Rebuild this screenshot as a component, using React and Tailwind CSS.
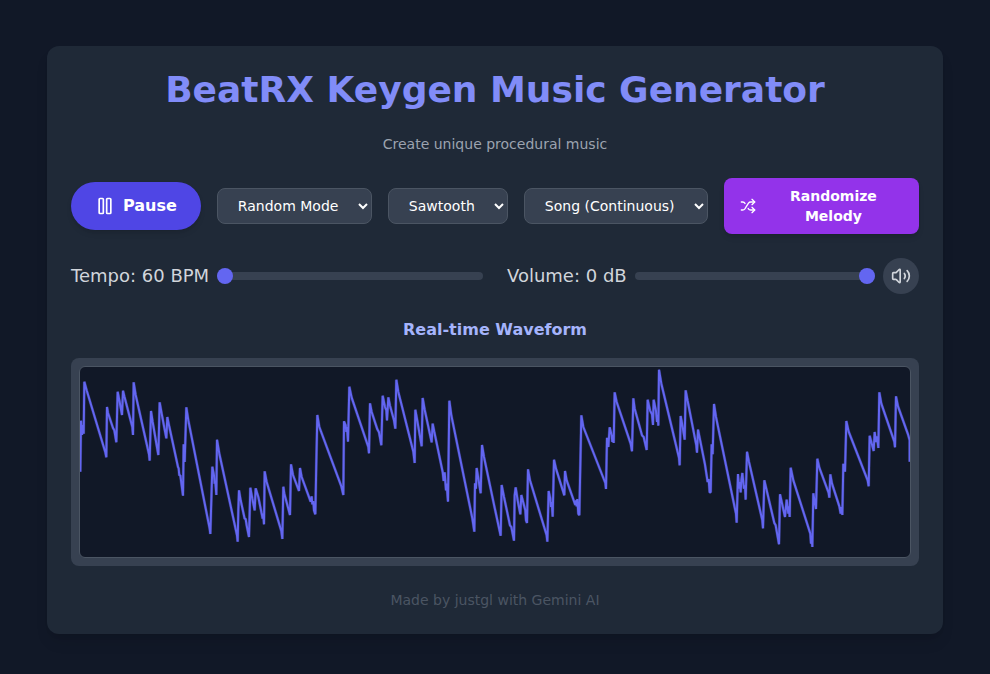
import { useState } from "react";
import { Pause, Play, Shuffle, Volume2, VolumeX } from "lucide-react";

const WAVE_POINTS = `1,314 3,161 6,204 8,174 11,200 13,44 20,70 76,256 79,271 81,120 84,138 99,183 103,190 109,226 113,74 119,105 126,144
129,71 133,88 157,180 159,204 161,46 167,84 207,262 209,281 213,132 218,165 235,264 239,106 245,140 259,214 262,150 267,175 294,300
296,304 298,325 301,325 309,386 311,232 314,285 319,121 325,160 389,485 391,501 397,299 402,325 404,350 406,345 409,384 411,218
418,260 471,505 473,524 475,430 477,370 482,400 494,455 497,456 500,475 507,510 511,362 517,395 524,430 527,364 535,390 548,455
550,440 552,472 554,313 560,345 604,492 607,516 610,359 613,380 630,444 633,292 639,324 657,372 660,303 665,330 692,404 695,388
697,412 700,402 702,430 706,442 709,284 712,144 718,180 784,358 790,384 792,163 797,175 799,195 801,180 804,224 808,59 815,92
865,240 867,259 870,109 875,135 892,187 897,196 904,235 908,86 915,120 919,130 921,160 925,91 930,116 942,160 946,185 949,38
955,75 1000,254 1004,288 1006,128 1012,162 1025,238 1028,93 1034,128 1055,226 1058,170 1063,195 1088,315 1091,342 1094,316
1098,370 1100,350 1104,404 1108,101 1114,145 1177,454 1183,494 1185,349 1188,365 1190,303 1202,379 1206,234 1212,270 1245,427
1262,506 1265,354 1272,390 1290,475 1294,480 1302,521 1304,385 1307,361 1313,400 1321,442 1324,384 1336,430 1338,460 1341,468
1344,307 1350,340 1400,505 1402,524 1406,372 1411,395 1413,420 1415,405 1418,449 1422,278 1428,305 1453,385 1455,312 1460,340
1486,414 1489,400 1490,418 1492,396 1495,440 1498,445 1504,145 1510,180 1576,348 1578,366 1581,212 1585,240 1589,181 1595,205
1597,225 1599,204 1601,228 1604,76 1610,105 1652,230 1656,253 1660,94 1664,125 1686,205 1691,210 1700,249 1703,98 1710,130
1716,142 1719,174 1721,98 1728,132 1731,165 1733,145 1735,176 1737,8 1744,50 1797,272 1799,295 1802,147 1808,180 1814,218
1817,70 1823,102 1849,235 1851,257 1854,188 1875,293 1883,345 1886,336 1889,376 1892,376 1895,232 1898,262 1902,111 1908,150
1968,440 1970,467 1974,321 1977,365 1979,345 1982,376 1984,340 1987,318 1992,365 1995,355 1997,398 2001,254 2007,285 2047,460
2049,484 2053,340 2083,468 2087,475 2097,532 2100,382 2115,450 2120,398 2125,440 2127,418 2129,450 2132,302 2140,340 2191,500
2193,530 2195,512 2197,540 2200,379 2205,410 2208,426 2212,275 2218,302 2246,378 2248,392 2251,322 2256,350 2278,418 2282,440
2284,420 2287,444 2290,290 2295,314 2299,162 2306,194 2363,340 2366,358 2369,206 2381,252 2384,195 2388,225 2391,208 2395,243
2398,76 2404,110 2443,224 2445,241 2448,88 2454,118 2484,202 2489,220 2489,284`;

const SELECT_CLASS =
  "h-9 shrink-0 rounded-lg border border-[#4b5563] bg-[#374151] px-4 py-2 text-sm text-white";

const RANGE_CLASS =
  "h-2 w-full min-w-0 flex-1 cursor-pointer appearance-none rounded-lg bg-[#374151] [&::-webkit-slider-thumb]:h-4 [&::-webkit-slider-thumb]:w-4 [&::-webkit-slider-thumb]:appearance-none [&::-webkit-slider-thumb]:rounded-full [&::-webkit-slider-thumb]:bg-[#6366f1]";

function Waveform() {
  return (
    <div className="rounded-lg bg-[#374151] p-2">
      <svg
        role="img"
        aria-label="Real-time waveform"
        viewBox="0 0 2490 570"
        preserveAspectRatio="none"
        className="block h-48 w-full rounded-md border border-[#4b5563] bg-[#111827]"
      >
        <g fill="none" stroke="#6366f1" strokeLinejoin="bevel">
          <polyline points={WAVE_POINTS} strokeWidth="3" strokeOpacity="0.35" vectorEffect="non-scaling-stroke" />
          <polyline points={WAVE_POINTS} strokeWidth="2" vectorEffect="non-scaling-stroke" />
        </g>
      </svg>
    </div>
  );
}

export default function App() {
  const [playing, setPlaying] = useState(true);
  const [muted, setMuted] = useState(false);
  const [tempo, setTempo] = useState(60);
  const [volume, setVolume] = useState(0);

  return (
    <div className="flex min-h-screen flex-col items-center justify-center bg-[#111827] px-4 pt-[22px] pb-4 font-['DejaVu_Sans',sans-serif] text-[#f3f4f6]">
      <main className="flex w-full max-w-4xl flex-col gap-6 rounded-xl bg-[#1f2937] p-6 shadow-lg">
        <h1 className="text-center text-4xl font-bold text-[#818cf8]">BeatRX Keygen Music Generator</h1>
        <p className="text-center text-sm text-[#9ca3af]">Create unique procedural music</p>

        <div className="flex items-center justify-center gap-4">
          <button
            type="button"
            onClick={() => setPlaying(!playing)}
            className="flex shrink-0 items-center rounded-full bg-[#4f46e5] px-6 py-3 font-bold text-white shadow-md"
          >
            {playing ? <Pause size={20} className="mr-2" /> : <Play size={20} className="mr-2" />}
            {playing ? "Pause" : "Play"}
          </button>
          <select aria-label="Mode" className={SELECT_CLASS}>
            <option>Random Mode</option>
          </select>
          <select aria-label="Waveform" className={SELECT_CLASS}>
            <option>Sawtooth</option>
          </select>
          <select aria-label="Length" className={SELECT_CLASS}>
            <option>Song (Continuous)</option>
          </select>
          <button
            type="button"
            className="flex min-w-0 flex-1 items-center rounded-lg bg-[#9333ea] px-4 py-2 text-sm font-bold text-white shadow-md"
          >
            <Shuffle size={16} className="mr-2 shrink-0" />
            <span className="flex-1">Randomize Melody</span>
          </button>
        </div>

        <div className="grid grid-cols-2 gap-6">
          <div className="flex items-center gap-2">
            <label htmlFor="tempo" className="text-lg whitespace-nowrap text-[#d1d5db]">
              Tempo: {tempo} BPM
            </label>
            <input
              id="tempo"
              type="range"
              min="60"
              max="200"
              value={tempo}
              onChange={(e) => setTempo(Number(e.target.value))}
              className={RANGE_CLASS}
            />
          </div>
          <div className="flex items-center gap-2">
            <label htmlFor="volume" className="text-lg whitespace-nowrap text-[#d1d5db]">
              Volume: {volume} dB
            </label>
            <input
              id="volume"
              type="range"
              min="-40"
              max="0"
              value={volume}
              onChange={(e) => setVolume(Number(e.target.value))}
              className={RANGE_CLASS}
            />
            <button
              type="button"
              aria-label={muted ? "Unmute" : "Mute"}
              onClick={() => setMuted(!muted)}
              className="rounded-full bg-[#374151] p-2 text-[#d1d5db]"
            >
              {muted ? <VolumeX size={20} /> : <Volume2 size={20} />}
            </button>
          </div>
        </div>

        <section>
          <h2 className="mb-4 text-center font-bold text-[#a5b4fc]">Real-time Waveform</h2>
          <Waveform />
        </section>

        <footer className="text-center text-sm text-[#4b5563]">Made by justgl with Gemini AI</footer>
      </main>
    </div>
  );
}
